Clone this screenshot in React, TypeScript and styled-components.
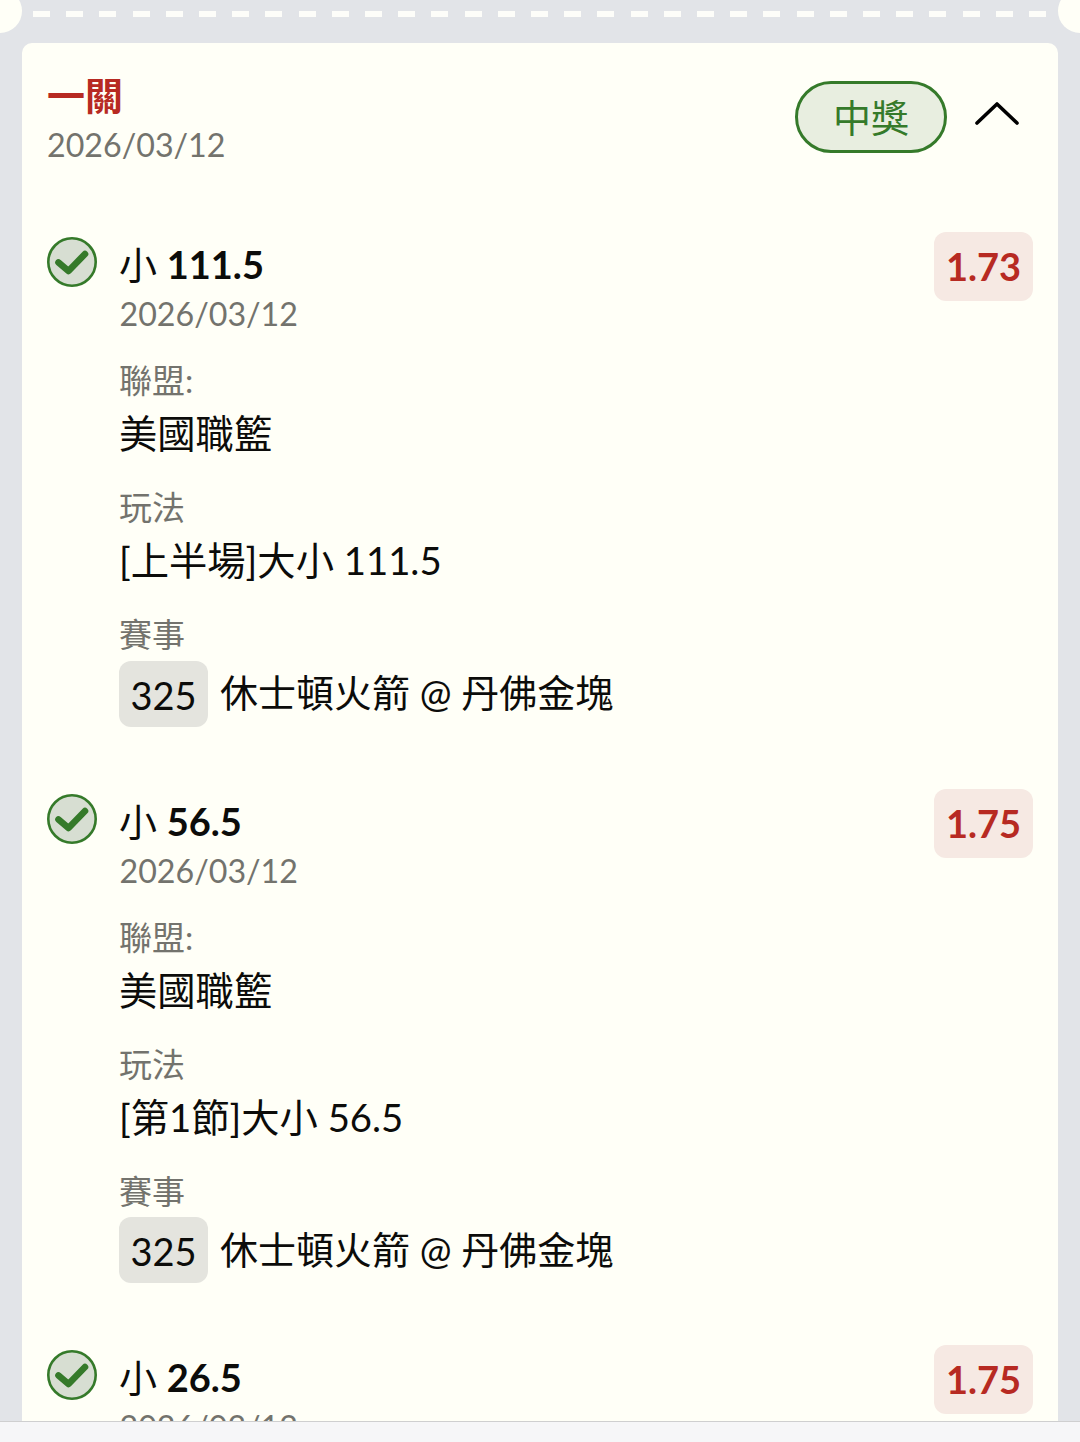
import * as React from "react";
import styled, { createGlobalStyle } from "styled-components";

type Bet = {
  pick: string;
  odds: string;
  play: string;
};

const bets: Bet[] = [
  { pick: "111.5", odds: "1.73", play: "[上半場]大小 111.5" },
  { pick: "56.5", odds: "1.75", play: "[第1節]大小 56.5" },
  { pick: "26.5", odds: "1.75", play: "[第1節]大小 26.5" },
];

const CheckIcon = () => (
  <svg width="50" height="50" viewBox="0 0 50 50">
    <circle cx="25" cy="25" r="23.7" fill="#d7ded2" stroke="#357a2a" strokeWidth="2.6" />
    <path
      d="M11.5 25.5 L21.5 34 L38 17"
      fill="none"
      stroke="#357a2a"
      strokeWidth="6.6"
      strokeLinecap="round"
      strokeLinejoin="round"
    />
  </svg>
);

const BetItem = ({ pick, odds, play }: Bet) => (
  <Item>
    <CheckSlot>
      <CheckIcon />
    </CheckSlot>
    <ItemBody>
      <ItemTitle>
        小 <b>{pick}</b>
      </ItemTitle>
      <ItemDate>2026/03/12</ItemDate>
      <Field>
        <FieldLabel>聯盟:</FieldLabel>
        <FieldValue>美國職籃</FieldValue>
      </Field>
      <Field>
        <FieldLabel>玩法</FieldLabel>
        <FieldValue>{play}</FieldValue>
      </Field>
      <Field>
        <FieldLabel>賽事</FieldLabel>
        <GameRow>
          <GameNo>325</GameNo>
          <GameName>休士頓火箭 @ 丹佛金塊</GameName>
        </GameRow>
      </Field>
    </ItemBody>
    <Odds>{odds}</Odds>
  </Item>
);

export default function App() {
  return (
    <Page>
      <GlobalStyle />
      <Main>
        <Perforation>
          <Dashes />
          <Notch data-side="left" />
          <Notch data-side="right" />
        </Perforation>
        <Card>
          <Header>
            <div>
              <ParlayTitle>一關</ParlayTitle>
              <HeaderDate>2026/03/12</HeaderDate>
            </div>
            <HeaderSide>
              <StatusPill>中獎</StatusPill>
              <Chevron width="44" height="24" viewBox="0 0 44 24">
                <path
                  d="M2 22 L22 3 L42 22"
                  fill="none"
                  stroke="#000"
                  strokeWidth="3.6"
                  strokeLinecap="round"
                  strokeLinejoin="round"
                />
              </Chevron>
            </HeaderSide>
          </Header>
          {bets.map((b) => (
            <BetItem key={b.pick} {...b} />
          ))}
        </Card>
      </Main>
      <BottomBar />
    </Page>
  );
}

const GlobalStyle = createGlobalStyle`
  html, body {
    margin: 0;
    padding: 0;
    background: #e2e4e8;
  }
  * {
    box-sizing: border-box;
  }
`;

const Page = styled.div`
  width: 1080px;
  height: 1442px;
  display: flex;
  flex-direction: column;
  overflow: hidden;
  font-family: Lato, "Noto Sans CJK TC", sans-serif;
`;

const Main = styled.div`
  flex: 1;
  min-height: 0;
  overflow: hidden;
`;

const Perforation = styled.div`
  position: relative;
  height: 43px;
  padding: 11px 0 0 33px;
`;

const Dashes = styled.div`
  height: 6px;
  width: 1015px;
  background: repeating-linear-gradient(
    90deg,
    #fdfdf9 0 17px,
    transparent 17px 33.2px
  );
`;

const Notch = styled.div`
  position: absolute;
  top: -11px;
  width: 44px;
  height: 44px;
  border-radius: 50%;
  background: #fffff7;

  &[data-side="left"] {
    left: -22px;
  }

  &[data-side="right"] {
    right: -22px;
  }
`;

const Card = styled.div`
  margin: 0 22px;
  padding: 29px 25px 0 25px;
  background: #fffff7;
  border-radius: 10px 10px 0 0;
`;

const Header = styled.div`
  display: flex;
  justify-content: space-between;
  align-items: flex-start;
  height: 160px;
`;

const ParlayTitle = styled.div`
  font-size: 38px;
  line-height: 46px;
  font-weight: 700;
  color: #b72a22;
`;

const HeaderDate = styled.div`
  font-size: 32.2px;
  line-height: 54px;
  color: #73736d;
`;

const HeaderSide = styled.div`
  display: flex;
  align-items: center;
  gap: 28px;
  margin: 9px 14px 0 0;
`;

const Chevron = styled.svg`
  margin-top: -9px;
`;

const StatusPill = styled.div`
  width: 152px;
  height: 72px;
  border: 3px solid #357a2a;
  border-radius: 36px;
  background: #e8eee0;
  color: #357a2a;
  font-size: 38px;
  line-height: 66px;
  text-align: center;
`;

const Item = styled.div`
  display: flex;
  align-items: flex-start;
  height: 556.5px;
`;

const CheckSlot = styled.div`
  width: 72px;
  flex: none;
  margin-top: 5px;
  height: 50px;
`;

const ItemBody = styled.div`
  flex: 1;
  min-width: 0;
`;

const ItemTitle = styled.div`
  font-size: 38px;
  line-height: 57px;
  color: #0c0c0a;
  padding-top: 4px;

  b {
    font-weight: 700;
  }
`;

const ItemDate = styled.div`
  font-size: 32.2px;
  line-height: 42px;
  color: #73736d;
  margin-bottom: 24px;
  padding-left: 0.5px;
`;

const Field = styled.div`
  margin-bottom: 21px;
`;

const FieldLabel = styled.div`
  font-size: 33px;
  line-height: 42px;
  color: #73736d;
`;

const FieldValue = styled.div`
  font-size: 38.3px;
  line-height: 64px;
  color: #0c0c0a;
`;

const GameRow = styled.div`
  display: flex;
  align-items: center;
  gap: 12px;
  margin-top: 5px;
`;

const GameName = styled(FieldValue)`
  font-size: 38px;
  margin-bottom: 3px;
`;

const GameNo = styled.div`
  width: 89px;
  height: 66px;
  border-radius: 12px;
  background: #e4e4de;
  color: #0c0c0a;
  font-size: 38px;
  line-height: 69px;
  text-align: center;
`;

const Odds = styled.div`
  flex: none;
  width: 99px;
  height: 69px;
  border-radius: 12px;
  background: #f6e9e3;
  color: #b72a22;
  font-size: 38px;
  font-weight: 700;
  line-height: 69px;
  text-align: center;
`;

const BottomBar = styled.div`
  flex: none;
  height: 21px;
  background: #f6f6f8;
  border-top: 1px solid #cfcfd0;
`;
